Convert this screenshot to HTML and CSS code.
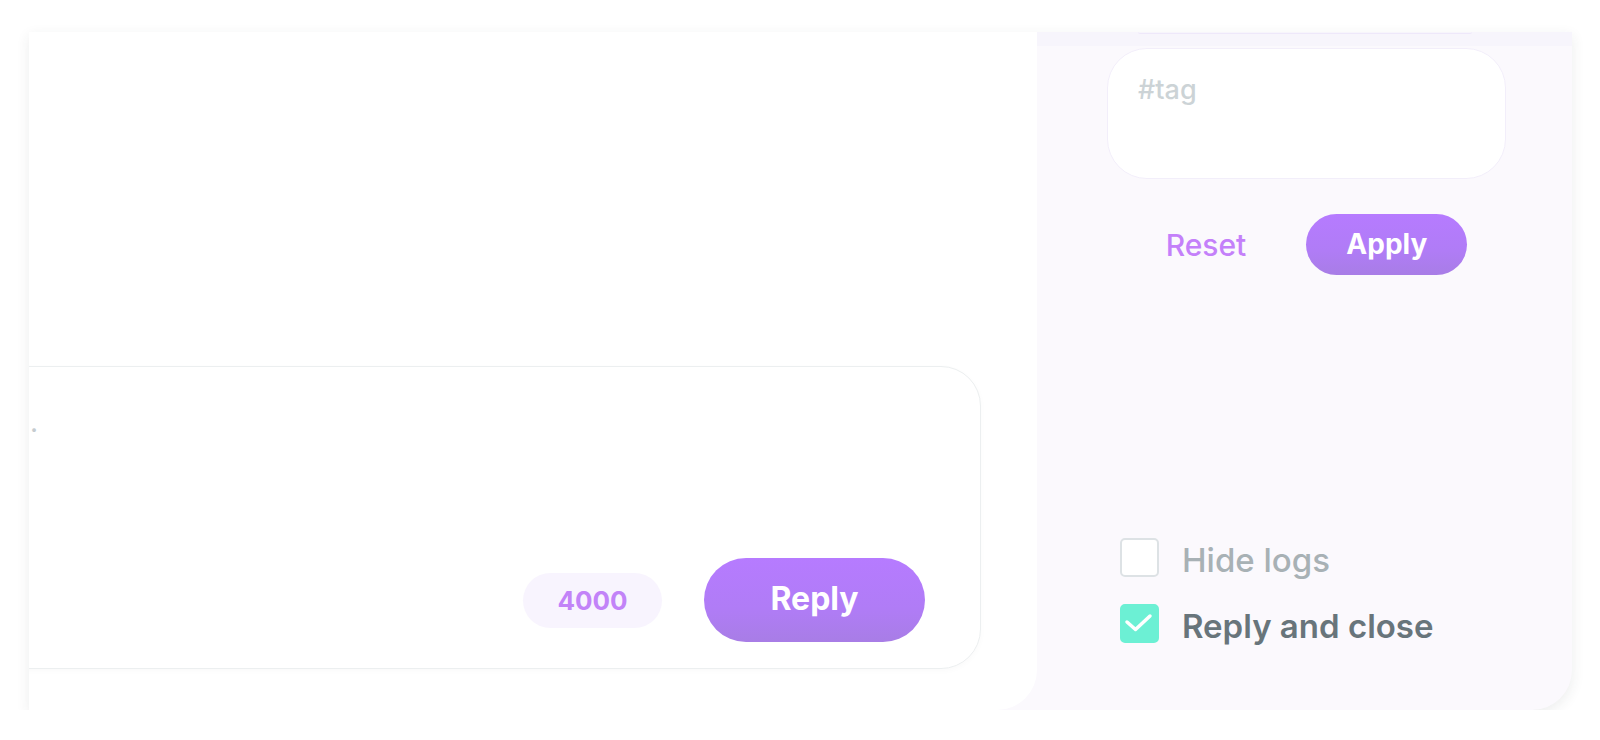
FILE: index.html
```html
<!DOCTYPE html>
<html lang="en">
<head>
    <meta charset="UTF-8">
    <meta name="viewport" content="width=device-width, initial-scale=1.0">
    <title>Ticket reply</title>
    <link rel="stylesheet" href="styles.css">
</head>
<body>

    <div class="panel">

        <!-- Conversation + reply -->
        <main class="conversation">
            <div class="reply-box">
                <textarea class="reply-input" placeholder="."></textarea>
                <div class="reply-footer">
                    <span class="char-count">4000</span>
                    <button class="btn-primary btn-reply">Reply</button>
                </div>
            </div>
        </main>

        <!-- Filters sidebar -->
        <aside class="sidebar">
            <div class="scroll-edge"><div class="scroll-edge-box"></div></div>

            <textarea class="tag-input" placeholder="#tag"></textarea>

            <div class="filter-actions">
                <button class="btn-link">Reset</button>
                <button class="btn-primary btn-apply">Apply</button>
            </div>

            <div class="options">
                <label class="option">
                    <span class="check"></span>
                    <span class="option-label muted">Hide logs</span>
                </label>
                <label class="option">
                    <span class="check checked">
                        <svg width="39" height="39" viewBox="0 0 39 39">
                            <polyline points="7,18 15.5,25.5 30,12" fill="none" stroke="#fff" stroke-width="3.5" stroke-linecap="round" stroke-linejoin="round"/>
                        </svg>
                    </span>
                    <span class="option-label">Reply and close</span>
                </label>
            </div>
        </aside>

    </div>

</body>
</html>
```

FILE: styles.css
```css
body {
    margin: 0;
    padding: 0;
    background-color: #fff;
    font-family: Inter, "Noto Sans", sans-serif;
    overflow: hidden;
}

/* Card */
.panel {
    margin: 32px 0 0 29px;
    width: 1543px;
    height: 678px;
    display: grid;
    grid-template-columns: 1008px minmax(0, 1fr);
    background-color: #fbf9fd;
    border-bottom-right-radius: 40px;
    box-shadow: 0 4px 14px rgba(40, 50, 60, 0.09);
    overflow: hidden;
}

/* Left part */
.conversation {
    background-color: #fff;
    border-bottom-right-radius: 40px;
    overflow: hidden;
    display: flex;
    flex-direction: column;
    justify-content: flex-end;
    padding: 0 56px 41px 0;
}

.reply-box {
    height: 303px;
    margin-left: -40px;
    box-sizing: border-box;
    display: flex;
    flex-direction: column;
    background-color: #fff;
    border: 1px solid #eceff0;
    border-radius: 0 40px 40px 0;
    box-shadow: 0 2px 6px rgba(0, 0, 0, 0.025);
    padding: 38px 55px 26px 40px;
}

.reply-input {
    flex: 1;
    min-width: 0;
    border: none;
    outline: none;
    resize: none;
    padding: 0;
    font-family: inherit;
    font-size: 28px;
    background: transparent;
}

.reply-input::placeholder {
    color: #c5ccd0;
}

.reply-footer {
    display: flex;
    justify-content: flex-end;
    align-items: center;
    gap: 42px;
}

.char-count {
    width: 139px;
    height: 55px;
    border-radius: 28px;
    background-color: #f8f4fe;
    color: #c283f8;
    font-size: 26px;
    font-weight: 700;
    display: flex;
    align-items: center;
    justify-content: center;
}

.btn-primary {
    border: none;
    color: #fff;
    font-family: inherit;
    font-weight: 700;
    background: linear-gradient(180deg, #b67bff 0%, #b07cf6 60%, #a87de6 100%);
    cursor: pointer;
}

.btn-reply {
    width: 221px;
    height: 84px;
    border-radius: 42px;
    font-size: 32px;
    padding: 0 0 4px;
}

/* Sidebar */
.sidebar {
    min-width: 0;
    display: flex;
    flex-direction: column;
    padding: 0 66px 67px 70px;
}

.scroll-edge {
    height: 14px;
    margin: 0 -66px 2px -70px;
    background-color: #f7f5fc;
}

.scroll-edge-box {
    height: 1px;
    margin: 0 100px 0 101px;
    border-bottom: 1px solid #eee8fa;
    border-radius: 0 0 20px 20px;
}

.tag-input {
    width: 100%;
    min-width: 0;
    height: 131px;
    box-sizing: border-box;
    border: 1px solid #f2eefa;
    border-radius: 40px;
    background-color: #fff;
    padding: 24px 30px;
    font-family: inherit;
    font-size: 27px;
    font-weight: 500;
    resize: none;
    outline: none;
}

.tag-input::placeholder {
    color: #ccd3d6;
}

.filter-actions {
    margin-top: 35px;
    display: flex;
    justify-content: center;
    align-items: center;
    gap: 40px;
}

.btn-link {
    border: none;
    background: none;
    padding: 0 20px;
    font-family: inherit;
    font-size: 30px;
    font-weight: 500;
    color: #c480fa;
    cursor: pointer;
}

.btn-apply {
    width: 161px;
    height: 61px;
    border-radius: 31px;
    font-size: 28px;
    padding: 0 0 2px;
}

.options {
    margin-top: auto;
    padding-left: 13px;
    display: flex;
    flex-direction: column;
    gap: 27px;
}

.option {
    height: 39px;
    display: flex;
    align-items: center;
    gap: 23px;
    font-size: 33px;
    font-weight: 600;
    color: #68757b;
}

.option-label {
    padding-top: 4px;
}

.check {
    flex: none;
    width: 39px;
    height: 39px;
    box-sizing: border-box;
    border: 2px solid #dde2e5;
    border-radius: 5px;
    background-color: #fff;
    position: relative;
}

.check.checked {
    background-color: #6cf0d4;
    border-color: #6cf0d4;
}

.check svg {
    position: absolute;
    left: -2px;
    top: -2px;
}

.option-label.muted {
    color: #a8b1b5;
    font-weight: 500;
}
```
